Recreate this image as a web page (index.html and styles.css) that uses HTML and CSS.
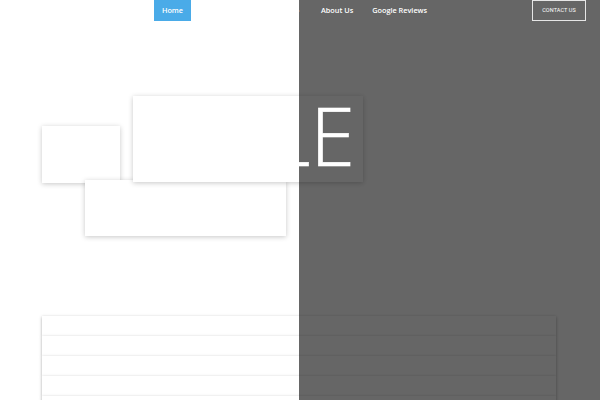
FILE: index.html
```html
<!DOCTYPE html>
<html>
<head>
<meta charset="utf-8">
<link rel="stylesheet" href="styles.css">
</head>
<body>
<div class="page">
  <header class="topbar">
    <nav class="nav">
      <a class="nav-item active">Home</a>
      <a class="nav-item services">Services</a>
      <a class="nav-item gallery">Gallery ›</a>
      <a class="nav-item">About Us</a>
      <a class="nav-item">Google Reviews</a>
    </nav>
    <a class="contact">CONTACT US</a>
  </header>
  <section class="hero">
    <div class="card card-small"></div>
    <div class="card card-low"></div>
    <div class="card card-main"><div class="title">LE</div></div>
  </section>
  <section class="rows">
    <div class="row"></div>
    <div class="row"></div>
    <div class="row"></div>
    <div class="row"></div>
    <div class="row"></div>
  </section>
  <div class="shade"></div>
</div>
</body>
</html>
```
FILE: styles.css
```css
html, body {
  margin: 0;
  padding: 0;
  background: #fff;
  overflow: hidden;
}
body {
  font-family: "Open Sans", "Liberation Sans", sans-serif;
}
.page {
  position: relative;
  width: 600px;
  height: 400px;
  overflow: hidden;
}
.topbar {
  position: relative;
  z-index: 3;
  display: flex;
  align-items: flex-start;
  height: 21px;
  padding-left: 154px;
  padding-right: 14px;
}
.nav {
  display: flex;
  align-items: center;
  height: 21px;
}
.nav-item {
  color: #fff;
  font-size: 7.3px;
  font-weight: 600;
  line-height: 21px;
  padding: 0 9.5px;
  white-space: nowrap;
  box-sizing: border-box;
}
.nav-item.active {
  background: #4aabe8;
  width: 37px;
  padding: 0;
  text-align: center;
}
.nav-item.services { width: 55px; }
.nav-item.gallery { width: 65.5px; text-align: right; padding-right: 12px; }
.contact {
  margin-left: auto;
  box-sizing: border-box;
  width: 54px;
  height: 21px;
  border: 1px solid #e6e6e6;
  color: #fff;
  font-family: "Roboto", "Liberation Sans", sans-serif;
  font-size: 5.5px;
  line-height: 19px;
  text-align: center;
  letter-spacing: 0.1px;
}
.hero {
  position: relative;
  height: 295px;
}
.card {
  position: absolute;
  background: #fff;
  box-shadow: 0 1px 5px rgba(0,0,0,0.22);
}
.card-main { left: 133px; top: 75px; width: 230px; height: 86px; }
.card-small { left: 42px; top: 105px; width: 78px; height: 57px; }
.card-low { left: 85px; top: 159px; width: 201px; height: 56px; }
.rows {
  display: flex;
  flex-direction: column;
  margin-left: 42px;
  width: 514px;
}
.row {
  height: 20px;
  background: #fff;
  box-shadow: 0 1px 3px rgba(0,0,0,0.34);
  position: relative;
}
.shade {
  position: absolute;
  left: 299px;
  top: 0;
  width: 301px;
  height: 400px;
  background: rgba(0,0,0,0.6);
  z-index: 2;
}
.title {
  position: absolute;
  z-index: 4;
  right: 8px;
  top: -4px;
  height: 86px;
  color: #fff;
  font-family: "Open Sans", sans-serif;
  font-weight: 300;
  font-size: 81px;
  line-height: 86px;
  white-space: nowrap;
  -webkit-text-stroke: 0.6px #fff;
}
```
